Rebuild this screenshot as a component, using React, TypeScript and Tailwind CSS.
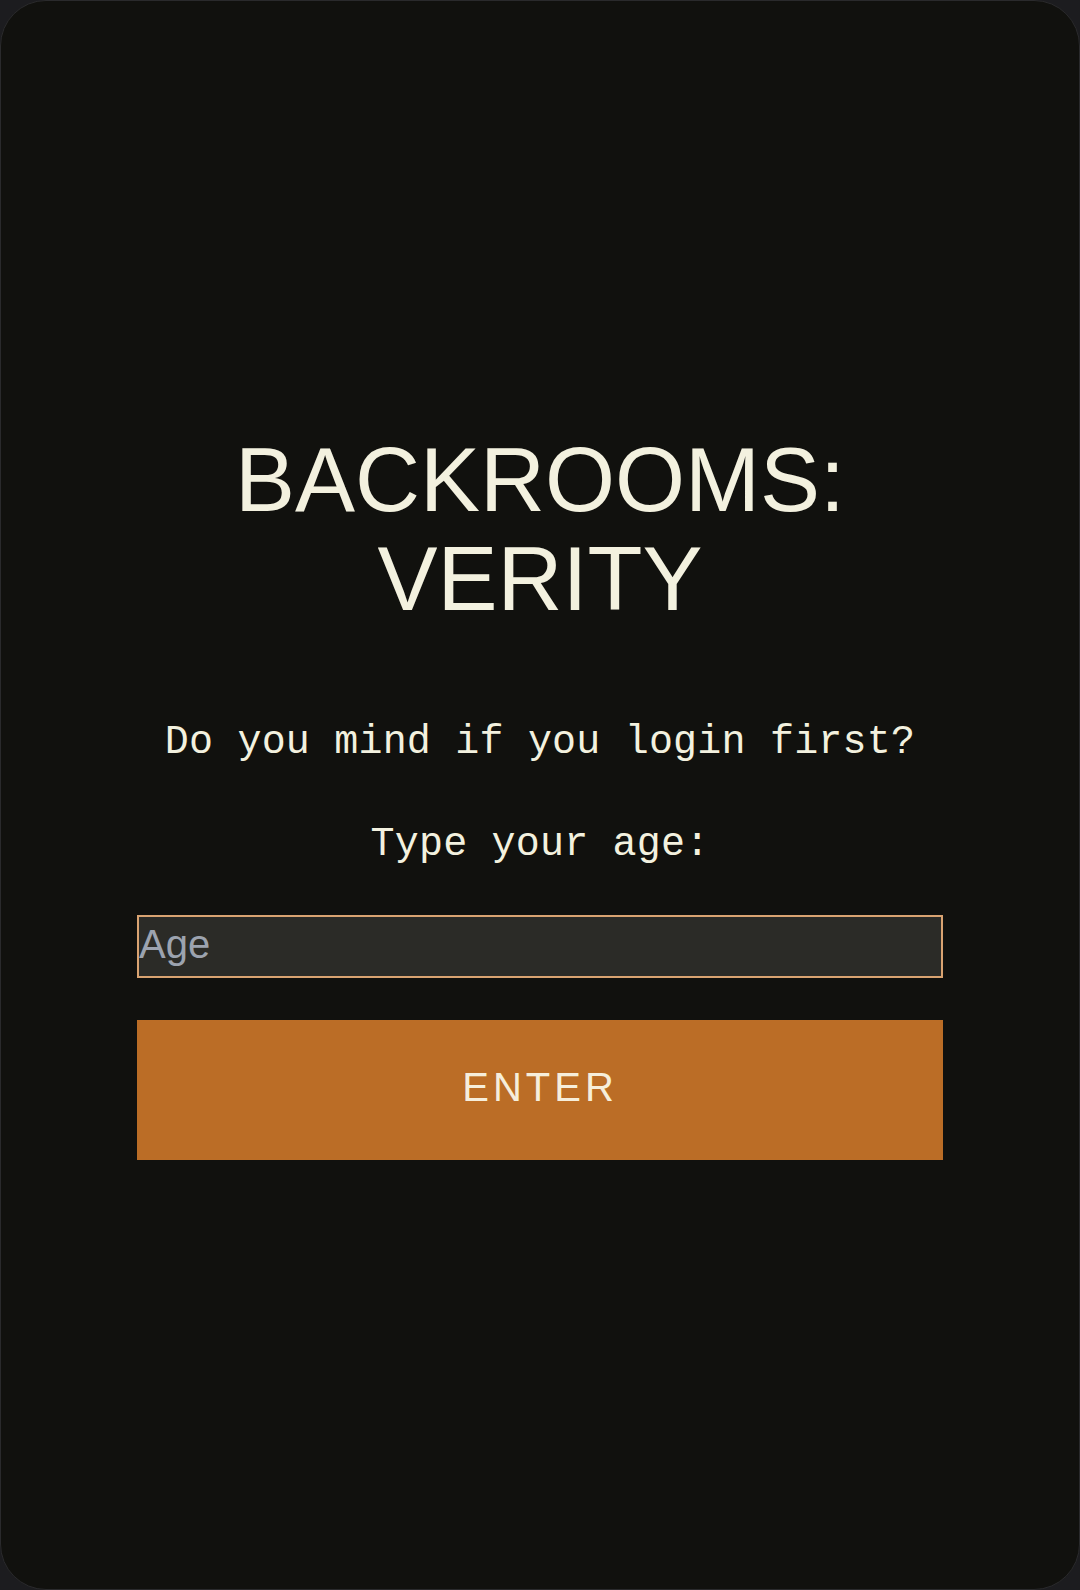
import { useState } from 'react';

// Age gate screen for the Backrooms: Verity game
export default function App() {
  const [age, setAge] = useState('');

  return (
    <div className="min-h-[1590px] w-[1080px] bg-[#1c1c1f]">
      <div className="flex h-[1590px] w-[1080px] flex-col items-center justify-center rounded-[46px] border border-[#2a2a2c] bg-[#11110e]">
        <h1 className="text-center font-['Liberation_Sans',Arial,sans-serif] text-[90px] leading-[99px] font-normal text-[#f3f1df]">
          BACKROOMS:
          <br />
          VERITY
        </h1>

        <p className="mt-[84px] font-['Liberation_Mono','Courier_New',monospace] text-[40px] leading-[60px] tracking-[0.2px] text-[#f3f1df]">
          Do you mind if you login first?
        </p>

        <p className="mt-[42px] font-['Liberation_Mono','Courier_New',monospace] text-[40px] leading-[60px] tracking-[0.2px] text-[#f3f1df]">
          Type your age:
        </p>

        <input
          type="text"
          value={age}
          onChange={(e) => setAge(e.target.value)}
          placeholder="Age"
          className="mt-[40px] h-[63px] w-[806px] border-2 border-[#d9a371] bg-[#2b2b27] px-0 pb-[3px] font-['Liberation_Sans',Arial,sans-serif] text-[40px] text-[#f3f1df] outline-none placeholder:text-[#9ca3af]"
        />

        <button
          type="button"
          className="mt-[42px] h-[140px] w-[806px] bg-[#bb6d26] pb-[6px] font-['Liberation_Sans',Arial,sans-serif] text-[40px] tracking-[0.1em] text-[#f6eedb]"
        >
          ENTER
        </button>
      </div>
    </div>
  );
}
